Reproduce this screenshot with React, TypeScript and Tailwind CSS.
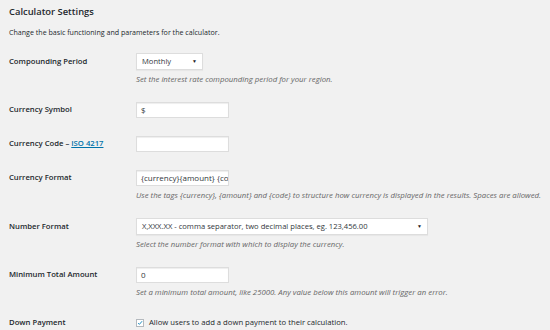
import React from "react";

const F = { fontFamily: '"Open Sans", "Noto Sans", Arial, sans-serif' };

function Label({ children, h = "h-[16px]" }: { children: React.ReactNode; h?: string }) {
  return (
    <div className={`w-[127px] shrink-0 flex items-center ${h} text-[7.7px] font-semibold text-[#23282d] whitespace-nowrap`}>
      {children}
    </div>
  );
}

function Hint({ children }: { children: React.ReactNode }) {
  return <div className="mt-[3px] text-[7.8px] leading-[12px] italic text-[#666] whitespace-nowrap">{children}</div>;
}

function Input({ value = "", w = "w-[93px]" }: { value?: string; w?: string }) {
  return (
    <div
      className={`${w} h-[16px] bg-white border border-[#ddd] shadow-[inset_0_1px_1px_rgba(0,0,0,0.07)] flex items-center pl-[4px] text-[8px] text-[#32373c] overflow-hidden whitespace-nowrap`}
    >
      {value}
    </div>
  );
}

function Select({ value, w }: { value: string; w: string }) {
  return (
    <div
      className={`${w} h-[17px] bg-white border border-[#ddd] shadow-[0_1px_1px_rgba(0,0,0,0.04)] flex items-center justify-between pl-[5px] pr-[5px] text-[7.6px] text-[#32373c] whitespace-nowrap`}
    >
      <span>{value}</span>
      <span className="text-[5px] text-[#222]">▼</span>
    </div>
  );
}

export default function App() {
  return (
    <div style={F} className="w-[550px] h-[330px] bg-[#f1f1f1] overflow-hidden pl-[9px] text-[#23282d]">
      <div className="pt-[4px] text-[9.4px] leading-[16px] font-semibold">Calculator Settings</div>
      <div className="mt-[6px] text-[7.1px] leading-[12px] text-[#23282d]">
        Change the basic functioning and parameters for the calculator.
      </div>

      <div className="mt-[15px] flex">
        <Label h="h-[17px]">Compounding Period</Label>
        <div>
          <Select value="Monthly" w="w-[67px]" />
          <Hint>Set the interest rate compounding period for your region.</Hint>
        </div>
      </div>

      <div className="mt-[17px] flex">
        <Label>Currency Symbol</Label>
        <Input value="$" />
      </div>

      <div className="mt-[18px] flex">
        <Label>
          <span>
            Currency Code –{" "}
            <span className="text-[#0073aa] underline font-semibold">ISO 4217</span>
          </span>
        </Label>
        <Input />
      </div>

      <div className="mt-[18px] flex">
        <Label>Currency Format</Label>
        <div>
          <Input value="{currency}{amount} {code}" />
          <Hint>
            Use the tags {"{currency}"}, {"{amount}"} and {"{code}"} to structure how currency is displayed in the
            results. Spaces are allowed.
          </Hint>
        </div>
      </div>

      <div className="mt-[17px] flex">
        <Label h="h-[17px]">Number Format</Label>
        <div>
          <Select value="X,XXX.XX - comma separator, two decimal places, eg. 123,456.00" w="w-[292px]" />
          <Hint>Select the number format with which to display the currency.</Hint>
        </div>
      </div>

      <div className="mt-[17px] flex">
        <Label>Minimum Total Amount</Label>
        <div>
          <Input value="0" />
          <Hint>Set a minimum total amount, like 25000. Any value below this amount will trigger an error.</Hint>
        </div>
      </div>

      <div className="mt-[20px] flex">
        <Label h="h-[9px]">Down Payment</Label>
        <div className="flex items-center gap-[5px] h-[9px]">
          <div className="w-[8px] h-[8px] bg-white border border-[#b4b9be] flex items-center justify-center">
            <svg width="8" height="8" viewBox="0 0 8 8">
              <path d="M1.5 4.2 L3.2 5.8 L6.8 1.6" stroke="#1e8cbe" strokeWidth="1.3" fill="none" />
            </svg>
          </div>
          <span className="text-[7.7px] text-[#23282d]">Allow users to add a down payment to their calculation.</span>
        </div>
      </div>
    </div>
  );
}
